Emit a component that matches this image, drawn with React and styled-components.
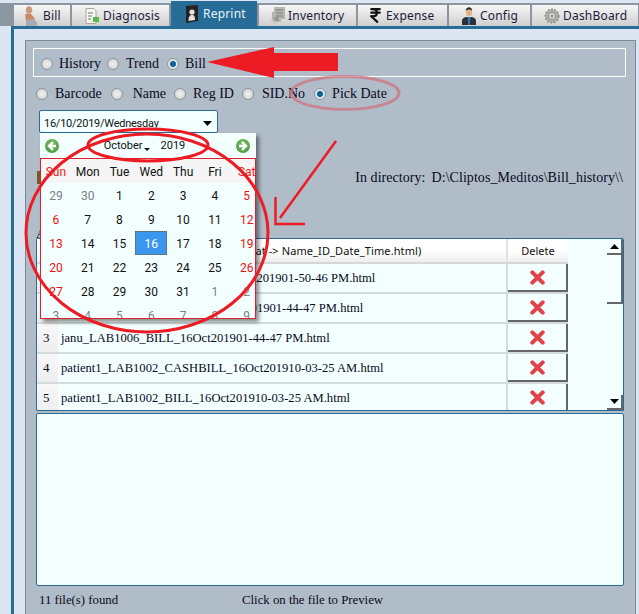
import styled, { createGlobalStyle } from 'styled-components'
import { IndianRupee } from 'lucide-react'

const TABS = [
  { label: 'Bill', width: 56, pad: 10, gap: 5, icon: <BillIcon /> },
  { label: 'Diagnosis', width: 97, pad: 13, gap: 4, icon: <DiagnosisIcon /> },
  { label: 'Reprint', width: 86, pad: 14, gap: 4, icon: <ReprintIcon />, active: true },
  { label: 'Inventory', width: 97, pad: 11, gap: 3, icon: <InventoryIcon /> },
  { label: 'Expense', width: 89, pad: 9, gap: 2, icon: <IndianRupee size={17} strokeWidth={3} color="#111" /> },
  { label: 'Config', width: 81, pad: 13, gap: 4, icon: <ConfigIcon /> },
  { label: 'DashBoard', width: 106, pad: 12, gap: 3, icon: <DashIcon /> },
]

const WEEK = ['Sun', 'Mon', 'Tue', 'Wed', 'Thu', 'Fri', 'Sat']

const DAYS = [
  29, 30, 1, 2, 3, 4, 5, 6, 7, 8, 9, 10, 11, 12, 13, 14, 15, 16, 17, 18, 19, 20, 21, 22, 23, 24, 25,
  26, 27, 28, 29, 30, 31, 1, 2, 3, 4, 5, 6, 7, 8, 9,
]

const FILES = [
  'janu11_LAB1006_CASHBILL_16Oct201901-50-46 PM.html',
  'janu_LAB1006_CASHBILL_16Oct201901-44-47 PM.html',
  'janu_LAB1006_BILL_16Oct201901-44-47 PM.html',
  'patient1_LAB1002_CASHBILL_16Oct201910-03-25 AM.html',
  'patient1_LAB1002_BILL_16Oct201910-03-25 AM.html',
]

function BillIcon() {
  return (
    <svg width="14" height="20" viewBox="0 0 14 20">
      <ellipse cx="5" cy="4" rx="3.2" ry="3.8" fill="#c79a80" />
      <path d="M1 9c1-2 6-2 7 0l3 4-2 2-7-1z" fill="#c98a62" />
      <path d="M2 14l7-1 4 3v4H2z" fill="#a9aab8" />
    </svg>
  )
}

function DiagnosisIcon() {
  return (
    <svg width="14" height="16" viewBox="0 0 14 16">
      <path d="M1 .5h8l2 2v13H1z" fill="#f6f6f0" stroke="#a8a89c" />
      <path d="M3 5h5M3 8h4M3 11h3" stroke="#777" />
      <rect x="8" y="9" width="6" height="5" fill="#58b848" />
    </svg>
  )
}

function ReprintIcon() {
  return (
    <svg width="14" height="18" viewBox="0 0 14 18">
      <path d="M1 1l12-1v16l-12 2z" fill="#26221f" />
      <circle cx="7" cy="7" r="2.6" fill="#e4e4e4" />
      <path d="M3.5 16c0-5 1.500-6 3.500-6s3 1 3 5z" fill="#e4e4e4" />
    </svg>
  )
}

function InventoryIcon() {
  return (
    <svg width="15" height="17" viewBox="0 0 15 17">
      <path d="M4 0h11v12H11v3H2V5h2z" fill="#b4b4b0" />
      <path d="M6 3h7M6 6h7M6 9h7M4 11h5M4 13h5" stroke="#7c7c78" />
      <path d="M0 13l4 4h4l-4-4z" fill="#c6c6c2" />
    </svg>
  )
}

function ConfigIcon() {
  return (
    <svg width="14" height="18" viewBox="0 0 14 18">
      <ellipse cx="7" cy="5" rx="3.200" ry="4.200" fill="#e2b48c" />
      <path d="M3.800 4c0-5 6.400-5 6.400 0-1-2-5-2-6.400 0z" fill="#2b2b2b" />
      <path d="M0 18v-4c0-3 3-4 5-4l2 1 2-1c2 0 5 1 5 4v4z" fill="#2c3036" />
      <path d="M5.500 10h3L7.800 18H6.200z" fill="#2f78b8" />
    </svg>
  )
}

function DashIcon() {
  return (
    <svg width="16" height="16" viewBox="0 0 16 16">
      <circle cx="8" cy="8" r="6.500" fill="#b8b8b4" stroke="#8e8e8a" strokeWidth="2" strokeDasharray="2 1.200" />
      <circle cx="8" cy="8" r="3.800" fill="#d8d8d4" stroke="#858581" />
      <circle cx="8" cy="8" r="1.500" fill="#8e8e8a" />
    </svg>
  )
}

function DeleteIcon() {
  return (
    <svg width="15" height="15" viewBox="0 0 16 16">
      <path d="M2.500 2.500l11 11M13.500 2.500l-11 11" stroke="#e0444a" strokeWidth="4.400" strokeLinecap="round" />
    </svg>
  )
}

function Arrow({ up }) {
  return (
    <svg width="9" height="5" viewBox="0 0 9 5">
      <path d={up ? 'M4.500 0L9 5H0z' : 'M0 0h9L4.500 5z'} fill="#000" />
    </svg>
  )
}

function Radio({ label, checked, gap, after }) {
  return (
    <Option $after={after}>
      <RadioDot $checked={checked} />
      <OptionText $gap={gap}>{label}</OptionText>
    </Option>
  )
}

function Annotations() {
  return (
    <Overlay viewBox="0 0 639 614">
      <polygon points="207,62 274,47 274,53 338,53 338,71 274,71 274,78" fill="#ed1c24" />
      <ellipse cx="345" cy="93" rx="54" ry="16.500" fill="none" stroke="#d0707c" strokeOpacity="0.7" strokeWidth="3" />
      <ellipse cx="148" cy="145" rx="60" ry="16" fill="none" stroke="#ed1c24" strokeWidth="3" />
      <ellipse cx="147" cy="233" rx="121" ry="99" fill="none" stroke="#ed1c24" strokeWidth="3" />
      <path d="M336 141L280 218" fill="none" stroke="#ed1c24" strokeWidth="2.500" />
      <path d="M275.500 197V224H305" fill="none" stroke="#ed1c24" strokeWidth="2.500" />
    </Overlay>
  )
}

function Calendar() {
  return (
    <Popup>
      <CalHeader>
        <NavButton>
          <svg width="14" height="14" viewBox="0 0 14 14">
            <path d="M8 3L4 7l4 4M4 7h7" fill="none" stroke="#fff" strokeWidth="2.400" />
          </svg>
        </NavButton>
        <MonthLabel>
          <span>October</span>
          <MonthCaret />
          <span>2019</span>
        </MonthLabel>
        <NavButton>
          <svg width="14" height="14" viewBox="0 0 14 14">
            <path d="M6 3l4 4-4 4M10 7H3" fill="none" stroke="#fff" strokeWidth="2.400" />
          </svg>
        </NavButton>
      </CalHeader>
      <CalBody>
        <WeekRow>
          {WEEK.map((day, i) => (
            <WeekDay key={day} $weekend={i === 0 || i === 6}>
              {day}
            </WeekDay>
          ))}
        </WeekRow>
        <DayGrid>
          {DAYS.map((day, i) => {
            const outside = i < 2 || i > 32
            return (
              <Day
                key={i}
                $outside={outside}
                $weekend={!outside && (i % 7 === 0 || i % 7 === 6)}
                $selected={i === 17}
              >
                {day}
              </Day>
            )
          })}
        </DayGrid>
      </CalBody>
    </Popup>
  )
}

export default function App() {
  return (
    <>
      <GlobalStyle />
      <TabBar>
        {TABS.map((tab) => (
          <Tab key={tab.label} $width={tab.width} $pad={tab.pad} $gap={tab.gap} $active={tab.active}>
            <TabIcon>{tab.icon}</TabIcon>
            {tab.label}
          </Tab>
        ))}
      </TabBar>
      <Frame>
        <Panel>
          <GroupBox>
            <Radio label="History" gap={6} after={6} />
            <Radio label="Trend" gap={7} after={8} />
            <Radio label="Bill" checked gap={6} />
          </GroupBox>
          <SearchRow>
            <Radio label="Barcode" gap={7} after={9} />
            <Radio label="Name" gap={10} after={8} />
            <Radio label="Reg ID" gap={7} after={8} />
            <Radio label="SID.No" gap={8} after={9} />
            <Radio label="Pick Date" checked gap={6} />
          </SearchRow>
          <ComboWrap>
            <Combo>
              16/10/2019/Wednesday
              <Arrow />
            </Combo>
            <Calendar />
          </ComboWrap>
          <DirRow>
            <BrownMark />
            <DirText>
              <span>In directory:</span>
              <span>D:\Cliptos_Meditos\Bill_history\\</span>
            </DirText>
          </DirRow>
          <ListLabel>Available</ListLabel>
          <TableBox>
            <Table>
              <HeadRow>
                <NumHead />
                <NameHead>File name (Format -&gt; Name_ID_Date_Time.html)</NameHead>
                <DeleteHead>Delete</DeleteHead>
              </HeadRow>
              {FILES.map((file, i) => (
                <Row key={file}>
                  <NumCell>{i + 1}</NumCell>
                  <NameCell>{file}</NameCell>
                  <DeleteCell>
                    <DeleteButton>
                      <DeleteIcon />
                    </DeleteButton>
                  </DeleteCell>
                </Row>
              ))}
            </Table>
            <ScrollBar>
              <ScrollButton $height={16}>
                <Arrow up />
              </ScrollButton>
              <ScrollThumb />
              <ScrollTrack />
              <ScrollButton $height={15}>
                <Arrow />
              </ScrollButton>
            </ScrollBar>
          </TableBox>
          <Preview />
          <StatusRow>
            <StatusCount>11 file(s) found</StatusCount>
            <span>Click on the file to Preview</span>
          </StatusRow>
        </Panel>
      </Frame>
      <Annotations />
    </>
  )
}

const GlobalStyle = createGlobalStyle`
  html, body {
    margin: 0;
    height: 614px;
    overflow: hidden;
    background: #dce6f2;
  }
  * {
    box-sizing: border-box;
  }
`

const Overlay = styled.svg`
  position: absolute;
  top: 0;
  left: 0;
  width: 639px;
  height: 614px;
  pointer-events: none;
`

const TabBar = styled.div`
  display: flex;
  align-items: flex-end;
  gap: 2px;
  height: 26px;
  padding-left: 14px;
  background: linear-gradient(#dce6f2 0, #dce6f2 3px, #8c96a0 3px, #8c96a0 100%);
  overflow: hidden;
`

const Tab = styled.div`
  flex: 0 0 ${(p) => p.$width}px;
  height: ${(p) => (p.$active ? 25 : 21)}px;
  display: flex;
  align-items: center;
  gap: ${(p) => p.$gap}px;
  padding-left: ${(p) => p.$pad}px;
  font: 12px 'Noto Sans', sans-serif;
  letter-spacing: 0.2px;
  color: ${(p) => (p.$active ? '#e8f4fb' : '#1c1c3c')};
  background: ${(p) => (p.$active ? '#266c96' : 'linear-gradient(#f6f6f6, #cfcfcf)')};
`

const TabIcon = styled.span`
  display: flex;
  align-items: center;
`

const Frame = styled.div`
  height: 588px;
  margin-left: 11px;
  padding: 11px 3px 0 11px;
  border-left: 3px solid #266c96;
  border-top: 3px solid #266c96;
`

const Panel = styled.div`
  height: 100%;
  display: flex;
  flex-direction: column;
  align-items: flex-start;
  padding: 7px 9px 0 7px;
  background: #b0bcc8;
  border: 1px solid #7a8a98;
  border-bottom: 0;
  font: 14px 'Liberation Serif', serif;
  color: #0a0a1e;
`

const GroupBox = styled.div`
  width: 593px;
  height: 29px;
  display: flex;
  align-items: center;
  padding: 2px 0 0 7px;
  border: 1px solid #fff;
`

const SearchRow = styled.div`
  height: 32px;
  display: flex;
  align-items: center;
  padding: 2px 0 0 3px;
`

const Option = styled.label`
  display: flex;
  align-items: center;
  margin-right: ${(p) => p.$after || 0}px;
`

const OptionText = styled.span`
  margin-left: ${(p) => p.$gap}px;
`

const RadioDot = styled.span`
  width: 12px;
  height: 12px;
  border-radius: 50%;
  border: 1px solid #8c969c;
  background: ${(p) =>
    p.$checked
      ? 'radial-gradient(circle, #0a6fa8 0, #0a5c92 2.5px, #dfe3e6 3.5px, #e6e8ea 100%)'
      : 'radial-gradient(circle, #f2f2f2 0, #dcdcdc 60%, #c6c9cc 100%)'};
`

const ComboWrap = styled.div`
  position: relative;
  width: 179px;
  height: 23px;
  margin: 1px 0 0 6px;
`

const Combo = styled.div`
  height: 23px;
  display: flex;
  align-items: center;
  justify-content: space-between;
  padding: 3px 5px 0 4px;
  background: #f3ffff;
  border: 1px solid #2a6a94;
  border-radius: 2px;
  font: 11px Roboto, sans-serif;
  letter-spacing: -0.25px;
  color: #111;
`

const Popup = styled.div`
  position: absolute;
  top: 23px;
  left: 1px;
  width: 216px;
  height: 186px;
  background: #f3ffff;
  box-shadow: 3px 3px 4px rgba(0, 0, 0, 0.45);
  font: 12px Roboto, sans-serif;
  color: #111;
`

const CalHeader = styled.div`
  height: 25px;
  display: flex;
  align-items: center;
  justify-content: space-between;
  padding: 0 6px 0 5px;
`

const NavButton = styled.span`
  width: 14px;
  height: 14px;
  display: flex;
  border-radius: 50%;
  background: radial-gradient(circle at 50% 35%, #7fc06a, #3f8f32);
`

const MonthLabel = styled.div`
  display: flex;
  align-items: center;
  margin-right: 6px;
  font-size: 11px;
`

const MonthCaret = styled.i`
  width: 0;
  height: 0;
  margin: 8px 11px 0 1px;
  border: 3px solid transparent;
  border-top-color: #111;
  border-bottom: 0;
`

const CalBody = styled.div`
  height: 161px;
  border: 1px solid #e0202c;
  overflow: hidden;
`

const WeekRow = styled.div`
  height: 24px;
  margin-left: -1px;
  padding-top: 2px;
  display: grid;
  grid-template-columns: repeat(7, 31.8px);
  align-items: center;
  background: #f5f5f5;
`

const WeekDay = styled.span`
  text-align: center;
  color: ${(p) => (p.$weekend ? '#ee2020' : '#111')};
`

const DayGrid = styled.div`
  margin-left: -1px;
  display: grid;
  grid-template-columns: repeat(7, 31.8px);
  grid-auto-rows: 24px;
`

const Day = styled.span`
  display: flex;
  align-items: center;
  justify-content: center;
  padding-top: 2px;
  color: ${(p) => {
    if (p.$selected) return '#fff'
    if (p.$outside) return '#808080'
    return p.$weekend ? '#ee1010' : '#111'
  }};
  background: ${(p) => (p.$selected ? '#3b96ee' : 'none')};
  border: ${(p) => (p.$selected ? '1px dotted #7a5a30' : '0')};
`

const DirRow = styled.div`
  align-self: stretch;
  height: 93px;
  display: flex;
  align-items: flex-start;
  justify-content: space-between;
  padding: 38px 0 0 4px;
`

const BrownMark = styled.span`
  width: 3px;
  height: 13px;
  background: #7a5a28;
`

const DirText = styled.div`
  display: flex;
  gap: 6px;
  margin: -1px 3px 0 0;
  letter-spacing: 0.05px;
  white-space: nowrap;
`

const ListLabel = styled.div`
  height: 12px;
  margin-left: 3px;
  line-height: 15px;
  font-size: 13px;
`

const TableBox = styled.div`
  width: 588px;
  height: 173px;
  margin: 0 0 0 3px;
  display: flex;
  flex: none;
  justify-content: space-between;
  background: #f3ffff;
  border: 1px solid #2a6a94;
  border-radius: 2px 2px 0 0;
  overflow: hidden;
`

const Table = styled.div`
  width: 531px;
  display: flex;
  flex-direction: column;
`

const HeadRow = styled.div`
  flex: 0 0 23px;
  display: grid;
  grid-template-columns: 21px 450px 60px;
  background: linear-gradient(#fff 50%, #eeeeee);
  border-bottom: 2px solid #d4d8d8;
  font: 11px 'Noto Sans', sans-serif;
  color: #111;
`

const NumHead = styled.span``

const NameHead = styled.span`
  padding-left: 28px;
  text-align: center;
  line-height: 23px;
  letter-spacing: 0.1px;
  white-space: nowrap;
  border-right: 2px solid #e2e2e2;
`

const DeleteHead = styled.span`
  text-align: center;
  line-height: 23px;
`

const Row = styled.div`
  flex: 0 0 30px;
  display: grid;
  grid-template-columns: 21px 450px 60px;
  align-items: stretch;
  border-bottom: 2px solid #d2dcdc;
  font-size: 12.6px;
`

const NumCell = styled.span`
  display: flex;
  align-items: center;
  padding-left: 6px;
  font-size: 13px;
  background: linear-gradient(#f8f8f8, #eeeeee);
`

const NameCell = styled.span`
  display: flex;
  align-items: center;
  padding-left: 3px;
  white-space: nowrap;
  border-right: 2px solid #d2dcdc;
`

const DeleteCell = styled.span`
  display: flex;
`

const DeleteButton = styled.button`
  flex: 1;
  display: flex;
  align-items: center;
  justify-content: center;
  padding: 0;
  background: #f3ffff;
  border: 0;
  border-right: 2px solid #666;
  border-bottom: 2px solid #666;
`

const ScrollBar = styled.div`
  width: 16px;
  display: flex;
  flex-direction: column;
`

const ScrollButton = styled.div`
  flex: 0 0 ${(p) => p.$height}px;
  display: flex;
  align-items: center;
  justify-content: center;
  background: #f3ffff;
  border-right: 2px solid #666;
  border-bottom: 2px solid #666;
`

const ScrollThumb = styled.div`
  flex: 0 0 49px;
  background: #f3ffff;
  border-right: 2px solid #666;
  border-bottom: 2px solid #666;
`

const ScrollTrack = styled.div`
  flex: 1;
`

const Preview = styled.div`
  width: 588px;
  height: 173px;
  margin: 2px 0 0 3px;
  flex: none;
  background: #f3ffff;
  border: 1px solid #2a6a94;
  border-radius: 2px;
`

const StatusRow = styled.div`
  display: flex;
  margin: 7px 0 0 6px;
  font-size: 12.8px;
`

const StatusCount = styled.span`
  width: 203px;
`
